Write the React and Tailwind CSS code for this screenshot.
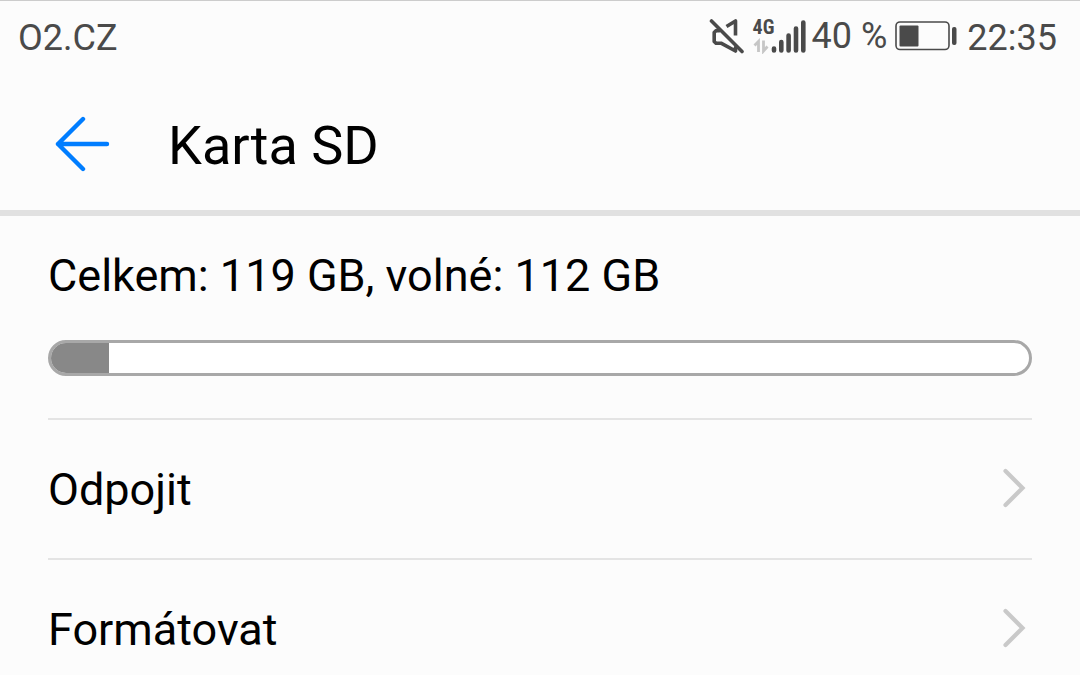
const ACTIONS = ['Odpojit', 'Formátovat'];
const TOTAL_GB = 119;
const FREE_GB = 112;

function MuteIcon() {
  return (
    <svg width="36" height="36" viewBox="0 0 36 36" fill="none" stroke="#4a4a4a" strokeWidth="3.6" strokeLinejoin="round" strokeLinecap="round">
      <path d="M10.5 12.6H7.2L5.2 14.6V23.4L7 25.2H12L26.5 33V29.5" />
      <path d="M17.5 8.5L26.5 3V17.5" strokeLinecap="butt" />
      <path d="M2.5 3L33 33.5" />
    </svg>
  );
}

function SignalIcon() {
  return (
    <svg width="53" height="36" viewBox="0 0 53 36" fill="none">
      <g stroke="#c6c6c6" strokeWidth="2.8">
        <path d="M5.5 34V23.5L1.5 27.5" />
        <path d="M10.5 22.5V33L14.5 28.5" />
      </g>
      <g stroke="#4a4a4a" strokeWidth="4.6" strokeLinecap="round">
        <path d="M21 30.5V32.5M28.3 24V32.5M35.6 17.5V32.5M43 10.5V32.5M50.3 4.5V32.5" />
      </g>
    </svg>
  );
}

function BatteryIcon() {
  return (
    <svg width="62" height="30" viewBox="0 0 62 30" fill="none">
      <rect x="1" y="1" width="53" height="27.5" rx="4" stroke="#4a4a4a" strokeWidth="1.6" />
      <rect x="4.5" y="4.5" width="19" height="21" rx="1" fill="#4a4a4a" />
      <rect x="57" y="6" width="4.5" height="18" rx="2" fill="#4a4a4a" />
    </svg>
  );
}

function BackIcon() {
  return (
    <svg width="56" height="56" viewBox="0 0 56 56" fill="none" stroke="#007dff" strokeWidth="4.4" strokeLinecap="round" strokeLinejoin="round">
      <path d="M29 3L4 28L29 53M4 28H53" />
    </svg>
  );
}

function ChevronIcon() {
  return (
    <svg width="24" height="40" viewBox="0 0 24 40" fill="none" stroke="#c9c9c9" strokeWidth="4.2" strokeLinecap="round">
      <path d="M3.5 3L20.5 20L3.5 37" strokeLinejoin="miter" />
    </svg>
  );
}

function StatusBar() {
  return (
    <div className="flex h-[74px] items-center justify-between border-t border-[#cccccc] pl-[18px] pr-[23px] text-[36px] leading-10 text-[#4a4a4a]">
      <span>O2.CZ</span>
      <div className="flex h-full items-center">
        <div className="flex items-center pb-1">
          <MuteIcon />
          <div className="relative ml-2">
            <span className="absolute left-0 top-0 font-['Roboto_Condensed','Liberation_Sans_Narrow',sans-serif] text-[20px] font-bold leading-[18px]">4G</span>
            <SignalIcon />
          </div>
          <span className="ml-[6px]">40 %</span>
          <span className="ml-2">
            <BatteryIcon />
          </span>
        </div>
        <span className="ml-[10px]">22:35</span>
      </div>
    </div>
  );
}

function StorageBar({ used }) {
  return (
    <div
      role="progressbar"
      aria-label="Karta SD"
      aria-valuenow={Math.round(used)}
      aria-valuemin={0}
      aria-valuemax={100}
      className="h-9 overflow-hidden rounded-full border-3 border-[#a8a8a8] bg-white"
    >
      <div className="h-full bg-[#888888]" style={{ width: `${used}%` }} />
    </div>
  );
}

export default function App() {
  const used = ((TOTAL_GB - FREE_GB) / TOTAL_GB) * 100;

  return (
    <div className="h-screen overflow-hidden bg-[#fcfcfc] font-[Roboto,sans-serif] text-black">
      <StatusBar />
      <header className="flex h-[142px] items-center border-b-6 border-[#e1e1e1] pl-[54px] pt-1">
        <button type="button" aria-label="Zpět">
          <BackIcon />
        </button>
        <h1 className="ml-[58px] pt-1 text-[54px] leading-[64px]">Karta SD</h1>
      </header>
      <main className="px-12 text-[45px] leading-[52px]">
        <section className="pb-[42px] pt-[34px]">
          <p className="mb-[38px]">
            Celkem: {TOTAL_GB} GB, volné: {FREE_GB} GB
          </p>
          <StorageBar used={used} />
        </section>
        <ul>
          {ACTIONS.map((label) => (
            <li key={label} className="border-t-2 border-[#e4e4e4]">
              <button type="button" className="flex h-[138px] w-full items-center justify-between pb-0.5 pr-[6px] text-left">
                <span className="pt-1">{label}</span>
                <ChevronIcon />
              </button>
            </li>
          ))}
        </ul>
      </main>
    </div>
  );
}
